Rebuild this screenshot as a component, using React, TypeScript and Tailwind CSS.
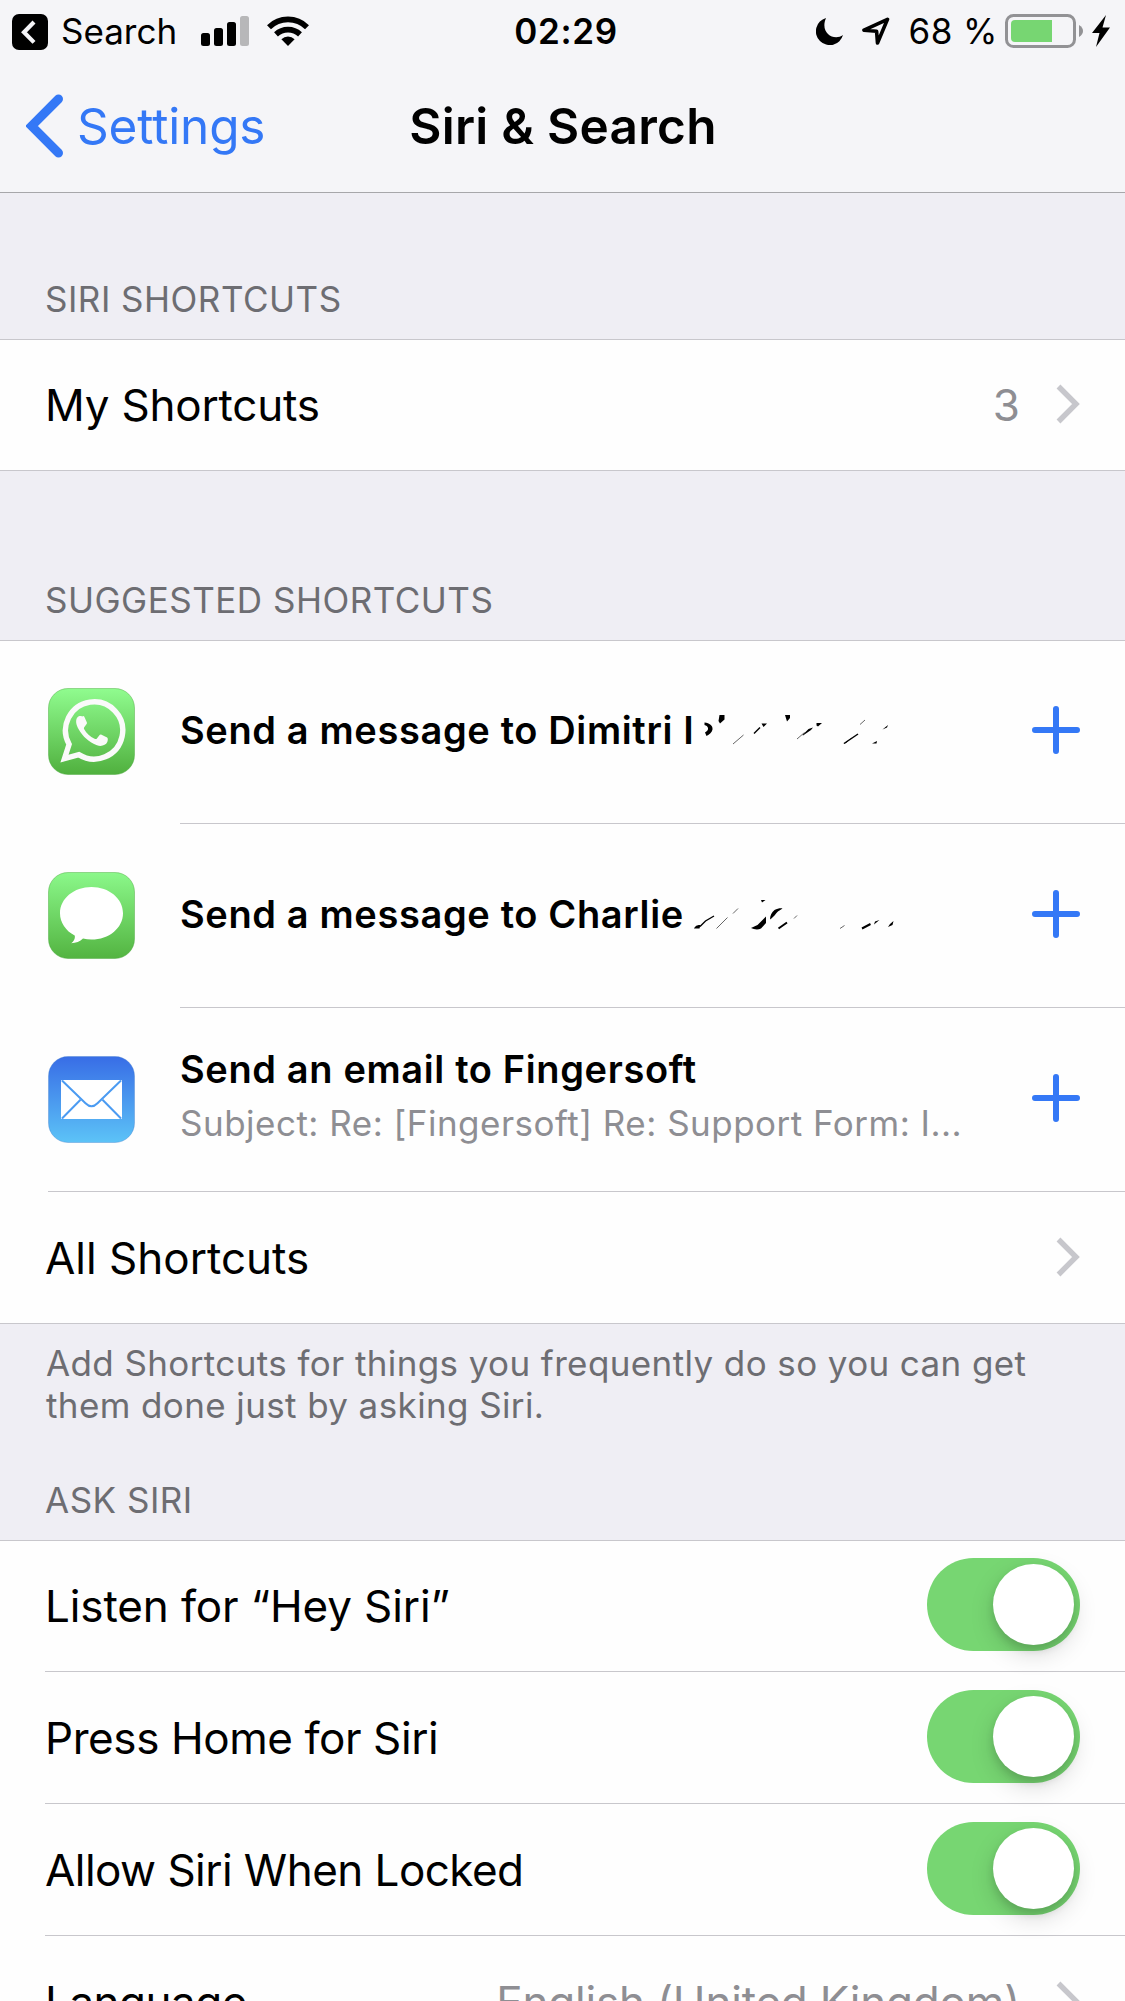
import type { ReactNode } from "react";

const ROW = "flex h-[130px] items-center justify-between";

function SignalIcon() {
  return (
    <svg width="48" height="30" viewBox="0 0 48 30">
      <rect x="0" y="17" width="9" height="13" rx="2.5" />
      <rect x="13" y="12" width="9" height="18" rx="2.5" />
      <rect x="26" y="6" width="9" height="24" rx="2.5" />
      <rect x="39" y="0" width="9" height="30" rx="2.5" fill="#b7b7b9" />
    </svg>
  );
}

function WifiIcon() {
  return (
    <svg width="42" height="30" viewBox="0 0 42 30">
      <g fill="none" stroke="#000" strokeWidth="5.6">
        <path d="M2 11.2A27 27 0 0 1 40 11.2" />
        <path d="M9 18.4A17.5 17.5 0 0 1 33 18.4" />
      </g>
      <path d="M21 30l-6.6-6.8a9.6 9.6 0 0 1 13.2 0z" />
    </svg>
  );
}

function MoonIcon() {
  return (
    <svg width="27" height="27" viewBox="0 0 27 27">
      <path d="M10 0A13.8 13.8 0 1 0 27 17C18 23.5 3.5 15 10 0z" />
    </svg>
  );
}

function LocationIcon() {
  return (
    <svg width="28" height="28" viewBox="0 0 28 28" className="ml-[19px]">
      <path
        d="M25.5 2.3L2 13.2l12.6 1.1.9 11.7z"
        fill="none"
        stroke="#000"
        strokeWidth="3.6"
        strokeLinejoin="round"
      />
    </svg>
  );
}

function BatteryIcon() {
  return (
    <svg width="79" height="34" viewBox="0 0 79 34">
      <rect x="1.5" y="1.5" width="68" height="31" rx="7" fill="none" stroke="#929295" strokeWidth="3" />
      <path d="M10 6h37v22H10a4 4 0 0 1-4-4V10a4 4 0 0 1 4-4z" fill="#77d672" />
      <path d="M74 11q4 2.5 4 6t-4 6z" fill="#929295" />
    </svg>
  );
}

function BoltIcon() {
  return (
    <svg width="18" height="32" viewBox="0 0 18 32">
      <path d="M14 0L0 18h7.5L4 32l14-19.5h-7.5z" />
    </svg>
  );
}

function StatusBar() {
  return (
    <div className="grid h-[62px] grid-cols-[1fr_auto_1fr] items-center text-[35px]">
      <div className="flex items-center pl-3">
        <svg width="36" height="36" viewBox="0 0 36 36" className="mt-0.5">
          <rect width="36" height="36" rx="7" />
          <path d="M22 8L12 18.2l10 10.2" fill="none" stroke="#f5f5f8" strokeWidth="4.2" />
        </svg>
        <span className="ml-[13px]">Search</span>
        <div className="ml-6 flex items-end gap-[18px]">
          <SignalIcon />
          <WifiIcon />
        </div>
      </div>
      <span className="pl-[7px] font-semibold tracking-[0.7px]">02:29</span>
      <div className="flex items-center justify-end pr-[15px]">
        <MoonIcon />
        <LocationIcon />
        <span className="ml-[18px] tracking-[0.5px]">68 %</span>
        <div className="ml-[7px] flex items-center gap-2">
          <BatteryIcon />
          <BoltIcon />
        </div>
      </div>
    </div>
  );
}

function NavBar() {
  return (
    <div className="grid h-[130px] grid-cols-[1fr_auto_1fr] items-center pb-0.5 text-[49.5px]">
      <div className="flex items-center pl-[26px] tracking-[-0.15px] text-[#3478f6]">
        <svg width="38" height="64" viewBox="0 0 38 64">
          <path d="M32.5 5L5.5 32l27 27" fill="none" stroke="currentColor" strokeWidth="9" strokeLinecap="round" />
        </svg>
        <span className="ml-[13px]">Settings</span>
      </div>
      <h1 className="pl-px font-semibold tracking-[0.27px]">Siri &amp; Search</h1>
    </div>
  );
}

function SectionHeader({ children }: { children: ReactNode }) {
  return (
    <h2 className="pb-[19px] pl-[45px] text-[35px] leading-[42px] tracking-[0.5px] text-[#6d6d72]">{children}</h2>
  );
}

function Chevron() {
  return (
    <svg width="24" height="40" viewBox="0 0 24 40" className="mr-[45px] -mt-0.5">
      <path d="M2.5 2.5L20 20l-17.5 17.5" fill="none" stroke="#c7c7cc" strokeWidth="5.4" />
    </svg>
  );
}

function PlusIcon() {
  return (
    <svg width="48" height="48" viewBox="0 0 48 48" className="mr-[45px] mb-1">
      <path d="M24 3v42M3 24h42" stroke="#3478f6" strokeWidth="6" strokeLinecap="round" />
    </svg>
  );
}

function Toggle() {
  return (
    <div className="mr-[45px] mb-[3px] flex h-[93px] w-[153px] items-center justify-end rounded-full bg-[#77d672] pr-1.5">
      <div className="size-[81px] rounded-full bg-white shadow-[0_9px_24px_rgba(0,0,0,0.15),0_5px_8px_rgba(0,0,0,0.12)]" />
    </div>
  );
}

function WhatsAppIcon() {
  return (
    <svg width="87" height="87" viewBox="0 0 87 87">
      <defs>
        <linearGradient id="whatsapp" x1="0" y1="0" x2="0" y2="1">
          <stop offset="0" stopColor="#90fc8f" />
          <stop offset="1" stopColor="#50b03e" />
        </linearGradient>
      </defs>
      <rect x="0.5" y="0.5" width="86" height="86" rx="19.5" fill="url(#whatsapp)" stroke="#4aa83c" strokeOpacity="0.45" />
      <path
        d="M16.5 70.5l4.6-14.2A28.6 28.6 0 1 1 30.8 66.6z"
        fill="none"
        stroke="#fafafa"
        strokeWidth="5.4"
      />
      <path
        d="M34 28.5c-1-.7-3.5-.5-4.5.8-2.2 2.6-1.6 7.2 1 11.7 4.2 7.6 10.5 13.3 18.5 16.3 4.4 1.500 8.700 0 10.300-3.300.7-2 .8-3.700-.2-4.400l-5.600-2.900c-1-.4-1.800.1-2.300.8l-2.300 3c-.6.7-1.400.7-2.300.3-4.600-2.200-8-5.200-10.400-9.500-.5-.9-.3-1.600.2-2.200l2.200-3c.4-.6.5-1.200.2-1.900l-2.600-5.700c-.4-.7-.9-.9-2.200 0z"
        fill="#fafafa"
      />
    </svg>
  );
}

function MessagesIcon() {
  return (
    <svg width="87" height="87" viewBox="0 0 87 87">
      <defs>
        <linearGradient id="messages" x1="0" y1="0" x2="0" y2="1">
          <stop offset="0" stopColor="#8bf88a" />
          <stop offset="1" stopColor="#53b441" />
        </linearGradient>
      </defs>
      <rect x="0.5" y="0.5" width="86" height="86" rx="19.5" fill="url(#messages)" stroke="#4aa83c" strokeOpacity="0.45" />
      <path
        d="M43.5 15C26 15 12 26.5 12 41.2c0 9.200 5.700 17.600 14.700 22.300.8 2.700-1 6-3.400 7.800 4.500 0 8.800-1.900 11.700-4.700 2.700.5 5.600.9 8.500.9C61 67.500 75 56 75 41.200S61 15 43.500 15z"
        fill="#fff"
      />
    </svg>
  );
}

function MailIcon() {
  return (
    <svg width="87" height="87" viewBox="0 0 87 87">
      <defs>
        <linearGradient id="mail" x1="0" y1="0" x2="0" y2="1">
          <stop offset="0" stopColor="#386de6" />
          <stop offset="1" stopColor="#5cc3f7" />
        </linearGradient>
      </defs>
      <rect x="0.5" y="0.5" width="86" height="86" rx="19.5" fill="url(#mail)" stroke="#3a78c8" strokeOpacity="0.35" />
      <rect x="13" y="24" width="61" height="39" rx="1" fill="#fff" />
      <g fill="none" stroke="#4b9bf2" strokeWidth="2">
        <path d="M14 24.5l23.5 22.8q6 6 12 0L73 24.5" />
        <path d="M14 62.5l18.5-18.7M73 62.5L54.5 43.8" />
      </g>
    </svg>
  );
}

// what is left visible of the surnames after they were rubbed out
function DimitriMarks() {
  return (
    <svg width="190" height="32" viewBox="704 714 190 32" className="ml-[9px]">
      <path d="M705.5 722.5c5 .5 8.5 3 8 7-.5 3-3 5-6 6.5l-1.500-3.500c2-1.500 3.500-2.500 3-4.500-.3-1.600-1.800-2.500-3.500-3z" />
      <path d="M720.5 715h5v4.5l-4.5 4-1.5-2.5zM786 715h5v3l-3 3.500zM762.5 723.500h5.500l-3.500 3.500zM817.500 723h5.500l-4 3.500-1.500-1zM803.500 735l6-6 4.500-1.500-2 2.500-8 5.500zM844.500 744l9-7-6.500 6zM883.500 729.500l5.500-4.500-1 2.500zM873 743.500l5-2.500-.5 2.500z" />
      <g fill="none" stroke="#000" strokeWidth="1">
        <path d="M755 733.5l6-6" strokeWidth="1.5" />
        <path d="M845 743.5l14-9.5" strokeWidth="1.5" />
        <path d="M734 744l10.5-9M798 739l7.5-6.5M861 724.5l5-4.5" strokeOpacity="0.6" />
      </g>
    </svg>
  );
}

function CharlieMarks() {
  return (
    <svg width="202" height="32" viewBox="692 897 202 32" className="ml-[9px]">
      <path d="M693 927.5c2-3.5 4-3.5 6.5-3.5l-1 3.5zM760 899h4.5l-3.5 2.5zM750 927l6.500-3 8.500-8.500v6.500l-5 5.500c-3 1.500-7 1-10-.5zM769 918.500c0-4 1.500-7 4.500-9.500 3-1.500 6-2 8-1.500l-3 2c-2.500 1-4.500 5.500-9.500 9zM873 923.500l1-3 4.500-1.500zM887 926l2-3 3.500-3-1 4z" />
      <g fill="none" stroke="#000">
        <path d="M699 925.5l5.500-5.5 8.500-5" strokeWidth="1.4" />
        <path d="M777.5 927.5l8.500-6M861 927.5l8.500-4.5" strokeWidth="2" />
        <path d="M715.5 927.5l11-11M732 912.5l5-5M839 927.5l4.500-3M793 917.5l3-3" strokeWidth="1" strokeOpacity="0.6" />
      </g>
    </svg>
  );
}

type SuggestionProps = {
  icon: ReactNode;
  title: string;
  subtitle?: string;
  marks?: ReactNode;
  first?: boolean;
};

function Suggestion({ icon, title, subtitle, marks, first }: SuggestionProps) {
  return (
    <li className="flex pl-12">
      <div className={first ? "pt-[47px]" : "pt-[49px]"}>{icon}</div>
      <div className={`ml-[45px] flex flex-1 border-[#c8c7cc] ${first ? "" : "border-t pt-px"}`}>
        <div className="flex h-[182px] flex-1 items-center justify-between">
          <div className={subtitle ? "pb-[9px]" : "pb-[5px]"}>
            <p className="flex items-center text-[38px] leading-[54px] font-semibold tracking-[0.63px] whitespace-pre">
              {title}
              {marks}
            </p>
            {subtitle && <p className="text-[35px] leading-[54px] tracking-[0.49px] text-[#8e8e93]">{subtitle}</p>}
          </div>
          <PlusIcon />
        </div>
      </div>
    </li>
  );
}

const toggles = [
  { label: "Listen for “Hey Siri”", tracking: "tracking-[-0.12px]" },
  { label: "Press Home for Siri", tracking: "tracking-[-0.42px]" },
  { label: "Allow Siri When Locked", tracking: "tracking-[-0.54px]" },
];

export default function App() {
  return (
    <div className="h-[2001px] w-[1125px] overflow-hidden bg-[#efeef4] font-[Inter,sans-serif] text-black">
      <header className="border-b border-[#a7a7aa] bg-[#f5f5f8]">
        <StatusBar />
        <NavBar />
      </header>

      <section className="pt-[85px]">
        <SectionHeader>SIRI SHORTCUTS</SectionHeader>
        <div className="border-y border-[#c8c7cc] bg-[#fefefe] pl-[45px] text-[44px]">
          <div className={ROW}>
            <span className="tracking-[-0.2px]">My Shortcuts</span>
            <div className="flex items-center gap-9">
              <span className="text-[#8e8e93]">3</span>
              <Chevron />
            </div>
          </div>
        </div>
      </section>

      <section className="pt-[108px]">
        <SectionHeader>SUGGESTED SHORTCUTS</SectionHeader>
        <div className="border-y border-[#c8c7cc] bg-[#fefefe]">
          <ul>
            <Suggestion
              first
              icon={<WhatsAppIcon />}
              title="Send a message to Dimitri I"
              marks={<DimitriMarks />}
            />
            <Suggestion icon={<MessagesIcon />} title="Send a message to Charlie" marks={<CharlieMarks />} />
            <Suggestion
              icon={<MailIcon />}
              title="Send an email to Fingersoft"
              subtitle="Subject: Re: [Fingersoft] Re: Support Form: I..."
            />
          </ul>
          <div className="ml-12 border-t border-[#c8c7cc] pt-px text-[44px]">
            <div className={ROW}>
              <span className="-ml-[3px]">All Shortcuts</span>
              <Chevron />
            </div>
          </div>
        </div>
        <p className="pt-[18px] pl-[46px] text-[35px] leading-[42px] tracking-[0.39px] text-[#6d6d72]">
          Add Shortcuts for things you frequently do so you can get
          <br />
          them done just by asking Siri.
        </p>
      </section>

      <section className="pt-[53px]">
        <SectionHeader>ASK SIRI</SectionHeader>
        <ul className="border-t border-[#c8c7cc] bg-[#fefefe] pl-[45px] text-[44px]">
          {toggles.map((t, i) => (
            <li key={t.label} className={`border-[#c8c7cc] ${i > 0 ? "border-t pt-px" : ""}`}>
              <div className={ROW}>
                <span className={t.tracking}>{t.label}</span>
                <Toggle />
              </div>
            </li>
          ))}
          <li className="border-t border-[#c8c7cc] pt-px">
            <div className={ROW}>
              <span className="tracking-[-0.5px]">Language</span>
              <div className="flex items-center gap-9">
                <span className="tracking-[-0.2px] text-[#8e8e93]">English (United Kingdom)</span>
                <Chevron />
              </div>
            </div>
          </li>
        </ul>
      </section>
    </div>
  );
}
